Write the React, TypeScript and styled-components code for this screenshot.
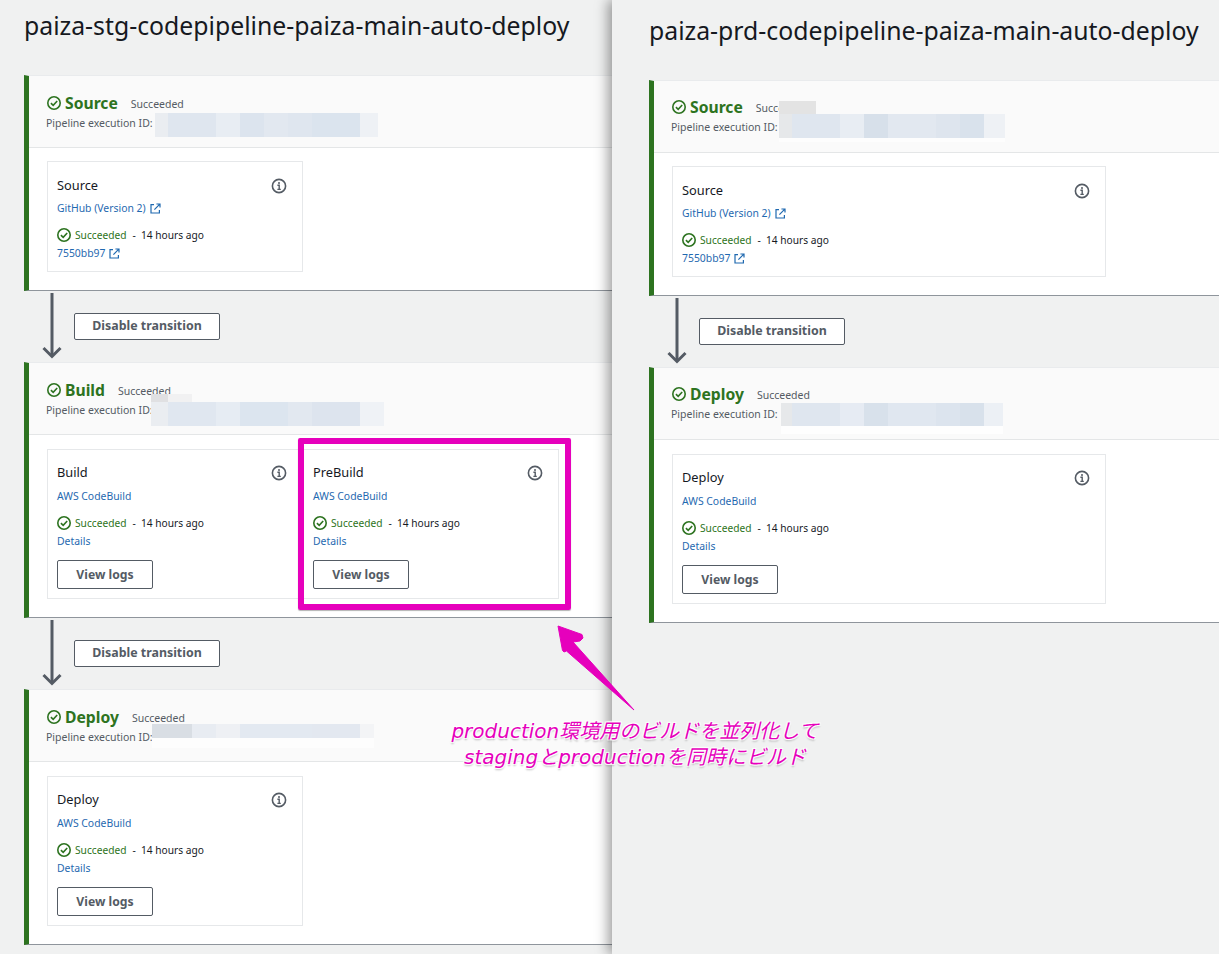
import styled, { createGlobalStyle } from "styled-components";

const GlobalStyle = createGlobalStyle`
  html, body {
    margin: 0;
    padding: 0;
    background: #f0f1f1;
  }
`;

const Page = styled.div`
  position: relative;
  width: 1219px;
  height: 954px;
  overflow: hidden;
  display: flex;
  background: #f0f1f1;
  font-family: "Noto Sans", "Open Sans", sans-serif;
  color: #16191f;
`;

const Panel = styled.section<{ $right?: boolean }>`
  flex: none;
  box-sizing: border-box;
  width: ${(p) => (p.$right ? "607px" : "612px")};
  height: 954px;
  overflow: hidden;
  background: #f0f1f1;
  padding: ${(p) => (p.$right ? "0 0 0 37px" : "0 0 0 24px")};
  position: relative;
  z-index: ${(p) => (p.$right ? 1 : 0)};
  box-shadow: ${(p) => (p.$right ? "-4px 0 12px rgba(0, 0, 0, 0.38)" : "none")};
`;

const Title = styled.h1<{ $right?: boolean }>`
  margin: 0;
  height: ${(p) => (p.$right ? "80px" : "75px")};
  padding-top: ${(p) => (p.$right ? "13px" : "8px")};
  box-sizing: border-box;
  font-size: 24.8px;
  line-height: 34px;
  font-weight: 400;
  white-space: nowrap;
`;

const Stage = styled.div`
  position: relative;
  box-sizing: border-box;
  width: 640px;
  background: #fff;
  border-left: 5px solid #2d7320;
  border-top: 1px solid #e9ebed;
  border-bottom: 1px solid #8f959c;
`;

const StageHeader = styled.header<{ $right?: boolean }>`
  box-sizing: border-box;
  height: 72px;
  padding: ${(p) => (p.$right ? "15px" : "16px")} 0 0 18px;
  background: #fafafa;
  border-bottom: 1px solid #e4e6e7;
`;

const StageTitleRow = styled.div`
  display: flex;
  align-items: center;
  height: 22px;
`;

const StageName = styled.span`
  margin-left: 4px;
  font-size: 15.7px;
  line-height: 22px;
  font-weight: 700;
  color: #2d7320;
`;

const StageStatus = styled.span`
  margin-left: 13px;
  font-size: 10.5px;
  line-height: 14px;
  color: #545b64;
  padding-top: 1px;
`;

const ExecutionLabel = styled.div`
  margin: 2px 0 0 -1px;
  font-size: 10.5px;
  line-height: 15px;
  color: #545b64;
`;

const Redaction = styled.div<{ $left: number; $top: number; $h: number }>`
  position: absolute;
  left: ${(p) => p.$left}px;
  top: ${(p) => p.$top}px;
  display: flex;
  height: ${(p) => p.$h}px;
`;

const RedactionCell = styled.i<{ $w: number; $c: string }>`
  display: block;
  width: ${(p) => p.$w}px;
  background: ${(p) => p.$c};
`;

const RedactionBit = styled.div<{ $left: number; $top: number; $w: number; $h: number; $c: string }>`
  position: absolute;
  left: ${(p) => p.$left}px;
  top: ${(p) => p.$top}px;
  width: ${(p) => p.$w}px;
  height: ${(p) => p.$h}px;
  background: ${(p) => p.$c};
`;

const StageBody = styled.div<{ $logs?: boolean }>`
  display: flex;
  padding: ${(p) => (p.$logs ? "14px" : "13px")} 0 18px 18px;
`;

const ActionCard = styled.div<{ $wide?: boolean; $logs?: boolean }>`
  box-sizing: border-box;
  width: ${(p) => (p.$wide ? "434px" : "256px")};
  padding: ${(p) => (p.$logs ? "13px 9px 9px" : "14px 9px 10px")};
  background: #fff;
  border: 1px solid #e6e8ea;
`;

const ActionHead = styled.div`
  display: flex;
  align-items: center;
  justify-content: space-between;
  height: 19px;
  padding-right: 6px;
`;

const ActionName = styled.div`
  font-size: 12.8px;
  line-height: 19px;
`;

const LinkRow = styled.div<{ $top: number }>`
  display: flex;
  align-items: center;
  gap: 4px;
  height: 15px;
  margin-top: ${(p) => p.$top}px;
  font-size: 10.4px;
  line-height: 15px;
  color: #1f69b0;
`;

const StatusRow = styled.div`
  display: flex;
  align-items: center;
  height: 16px;
  margin-top: 11px;
  font-size: 10.2px;
  line-height: 16px;
`;

const StatusOk = styled.span`
  margin-left: 4px;
  color: #2d7320;
`;

const StatusTime = styled.span`
  margin-left: 6px;
  color: #16191f;
`;

const OutlineButton = styled.button`
  display: block;
  box-sizing: border-box;
  padding: 0;
  background: #fff;
  border: 1px solid #545b64;
  border-radius: 2px;
  font-family: inherit;
  font-size: 12.2px;
  font-weight: 700;
  color: #545b64;
`;

const ViewLogs = styled(OutlineButton)`
  width: 96px;
  height: 29px;
  margin-top: 11px;
`;

const Transition = styled.div`
  display: flex;
  height: 71px;
`;

const ArrowWrap = styled.div`
  box-sizing: border-box;
  width: 50px;
  padding: 2px 0 0 18px;
`;

const DisableButton = styled(OutlineButton)`
  width: 146px;
  height: 27px;
  margin-top: 22px;
  padding-bottom: 2px;
  font-size: 12.4px;
`;

const Highlight = styled.div`
  position: absolute;
  left: 298px;
  top: 438px;
  width: 273px;
  height: 172px;
  box-sizing: border-box;
  border: 6px solid #e600bc;
  border-radius: 2px;
  box-shadow: 0 1px 1px rgba(0, 0, 0, 0.3);
  z-index: 2;
`;

const Pointer = styled.svg`
  position: absolute;
  left: 550px;
  top: 620px;
  z-index: 2;
`;

const Note = styled.div`
  position: absolute;
  left: 400px;
  top: 718px;
  width: 470px;
  z-index: 2;
  text-align: center;
  font-family: "DejaVu Sans", "Noto Sans CJK JP", sans-serif;
  font-size: 20px;
  font-style: italic;
  line-height: 26px;
  color: #e600bc;
  white-space: nowrap;
  text-shadow: 1px 1px 1px #fff, -1px 1px 1px #fff, 1px -1px 1px #fff, -1px -1px 1px #fff, 0 2px 2px rgba(0, 0, 0, 0.3);
`;

function CheckIcon() {
  return (
    <svg width="14" height="14" viewBox="0 0 14 14" fill="none" stroke="#2d7320" strokeWidth="1.6">
      <circle cx="7" cy="7" r="6.2" />
      <path d="M3.9 7.2 6.2 9.4 10.2 5" />
    </svg>
  );
}

function InfoIcon() {
  return (
    <svg width="16" height="16" viewBox="0 0 16 16" fill="none" stroke="#545b64">
      <circle cx="8" cy="8" r="6.6" strokeWidth="1.6" />
      <path d="M6.4 7.2H8.2V11.4M6.4 11.4H9.8" strokeWidth="1.4" />
      <circle cx="8" cy="4.9" r="1" fill="#545b64" stroke="none" />
    </svg>
  );
}

function ExternalIcon() {
  return (
    <svg width="11" height="11" viewBox="0 0 11 11" fill="none" stroke="#1f69b0" strokeWidth="1.2">
      <path d="M4 1.6H1V10H9.4V7" />
      <path d="M4.4 6.6 9.8 1.2M6.4 1H10V4.6" />
    </svg>
  );
}

function DownArrow() {
  return (
    <svg width="20" height="67" viewBox="0 0 20 67" fill="none" stroke="#545b64" strokeWidth="3">
      <path d="M10 0V63" />
      <path d="M1.5 55 10 63.5 18.5 55" />
    </svg>
  );
}

type Action = {
  name: string;
  provider: string;
  external?: boolean;
  detail: string;
  logs?: boolean;
};

type Patch = {
  left: number;
  top: number;
  h: number;
  cells: [number, string][];
  bits?: [number, number, number, number, string][];
};

type StageData = {
  name: string;
  patch: Patch;
  actions: Action[];
};

const codeBuild = (name: string): Action => ({ name, provider: "AWS CodeBuild", detail: "Details", logs: true });
const source: Action = { name: "Source", provider: "GitHub (Version 2)", external: true, detail: "7550bb97" };

const leftStages: StageData[] = [
  {
    name: "Source",
    patch: {
      left: 126,
      top: 37,
      h: 24,
      cells: [
        [13, "#eaedf1"],
        [48, "#dfe6ef"],
        [24, "#e8edf3"],
        [24, "#dce4ee"],
        [24, "#e2e8f0"],
        [24, "#dfe6ef"],
        [48, "#dbe4ee"],
        [18, "#eef1f5"],
      ],
    },
    actions: [source],
  },
  {
    name: "Build",
    patch: {
      left: 122,
      top: 39,
      h: 24,
      cells: [
        [17, "#eaedf1"],
        [48, "#e0e7f0"],
        [24, "#e6ecf3"],
        [48, "#dce5ef"],
        [24, "#e2e8f0"],
        [48, "#dde4ee"],
        [24, "#eff2f6"],
      ],
      bits: [
        [122, 31, 17, 8, "#e0e0e2"],
        [139, 31, 24, 8, "#f1f1f2"],
      ],
    },
    actions: [codeBuild("Build"), codeBuild("PreBuild")],
  },
  {
    name: "Deploy",
    patch: {
      left: 123,
      top: 34,
      h: 14,
      cells: [
        [40, "#d9dee4"],
        [24, "#e8ecf2"],
        [24, "#eef0f4"],
        [72, "#e3e9f1"],
        [48, "#e3e8f0"],
        [14, "#f3f4f6"],
      ],
      bits: [[123, 48, 222, 10, "#fdfdfd"]],
    },
    actions: [codeBuild("Deploy")],
  },
];

const rightStages: StageData[] = [
  {
    name: "Source",
    patch: {
      left: 125,
      top: 33,
      h: 24,
      cells: [
        [13, "#e6e8ea"],
        [48, "#dfe6ef"],
        [24, "#e8edf3"],
        [24, "#d7e0ea"],
        [48, "#e2e8f0"],
        [24, "#dee5ee"],
        [24, "#d9e2ec"],
        [21, "#eef1f5"],
      ],
      bits: [
        [125, 20, 37, 13, "#e3e3e3"],
        [125, 57, 226, 4, "#fdfdfd"],
      ],
    },
    actions: [source],
  },
  {
    name: "Deploy",
    patch: {
      left: 127,
      top: 35,
      h: 23,
      cells: [
        [11, "#e6e8ea"],
        [48, "#dfe6ef"],
        [24, "#e6ebf3"],
        [24, "#d8e1eb"],
        [48, "#e0e7f0"],
        [24, "#dce4ee"],
        [24, "#d8e1eb"],
        [19, "#ecf0f5"],
      ],
      bits: [[127, 58, 222, 8, "#fefefe"]],
    },
    actions: [codeBuild("Deploy")],
  },
];

function ActionBox({ action, wide }: { action: Action; wide?: boolean }) {
  return (
    <ActionCard $wide={wide} $logs={action.logs}>
      <ActionHead>
        <ActionName>{action.name}</ActionName>
        <InfoIcon />
      </ActionHead>
      <LinkRow $top={action.logs ? 7 : 6}>
        {action.provider}
        {action.external && <ExternalIcon />}
      </LinkRow>
      <StatusRow>
        <CheckIcon />
        <StatusOk>Succeeded</StatusOk>
        <StatusTime>-&nbsp; 14 hours ago</StatusTime>
      </StatusRow>
      <LinkRow $top={3}>
        {action.detail}
        {action.external && <ExternalIcon />}
      </LinkRow>
      {action.logs && <ViewLogs>View logs</ViewLogs>}
    </ActionCard>
  );
}

function StageBlock({ stage, wide }: { stage: StageData; wide?: boolean }) {
  return (
    <Stage>
      <StageHeader $right={wide}>
        <StageTitleRow>
          <CheckIcon />
          <StageName>{stage.name}</StageName>
          <StageStatus>Succeeded</StageStatus>
        </StageTitleRow>
        <ExecutionLabel>Pipeline execution ID:</ExecutionLabel>
      </StageHeader>
      <Redaction $left={stage.patch.left} $top={stage.patch.top} $h={stage.patch.h}>
        {stage.patch.cells.map(([w, c], i) => (
          <RedactionCell key={i} $w={w} $c={c} />
        ))}
      </Redaction>
      {stage.patch.bits?.map(([l, t, w, h, c], i) => (
        <RedactionBit key={i} $left={l} $top={t} $w={w} $h={h} $c={c} />
      ))}
      <StageBody $logs={stage.actions[0].logs}>
        {stage.actions.map((a) => (
          <ActionBox key={a.name} action={a} wide={wide} />
        ))}
      </StageBody>
    </Stage>
  );
}

function Pipeline({ stages, wide }: { stages: StageData[]; wide?: boolean }) {
  return (
    <>
      {stages.map((s, i) => (
        <div key={s.name}>
          <StageBlock stage={s} wide={wide} />
          {i < stages.length - 1 && (
            <Transition>
              <ArrowWrap>
                <DownArrow />
              </ArrowWrap>
              <DisableButton>Disable transition</DisableButton>
            </Transition>
          )}
        </div>
      ))}
    </>
  );
}

export default function App() {
  return (
    <Page>
      <GlobalStyle />
      <Panel>
        <Title>paiza-stg-codepipeline-paiza-main-auto-deploy</Title>
        <Pipeline stages={leftStages} />
      </Panel>
      <Panel $right>
        <Title $right>paiza-prd-codepipeline-paiza-main-auto-deploy</Title>
        <Pipeline stages={rightStages} wide />
      </Panel>
      <Highlight />
      <Pointer width="100" height="100" viewBox="0 0 100 100">
        <path
          d="M8 6 32 14.5 33 18 30 21 23 22 84 90 16.5 31 14 32 12.5 30.5Z"
          fill="#e600bc"
          stroke="#e600bc"
          strokeWidth="1"
          strokeLinejoin="round"
        />
      </Pointer>
      <Note>
        production環境用のビルドを並列化して
        <br />
        stagingとproductionを同時にビルド
      </Note>
    </Page>
  );
}
